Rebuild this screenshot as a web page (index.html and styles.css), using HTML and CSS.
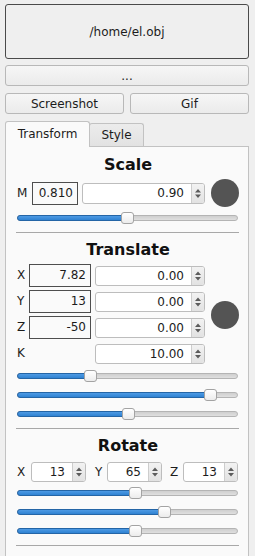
FILE: index.html
```html
<!DOCTYPE html>
<html lang="en">
<head>
  <meta charset="UTF-8" />
  <title>Viewer</title>
  <link rel="stylesheet" href="styles.css">
</head>
<body>
  <div class="app">
    <button class="btn file-btn">/home/el.obj</button>
    <button class="btn small-btn">...</button>
    <div class="btn-row">
      <button class="btn small-btn">Screenshot</button>
      <button class="btn small-btn">Gif</button>
    </div>

    <!-- Tabs -->
    <div class="tabs">
      <div class="tab active">Transform</div>
      <div class="tab">Style</div>
    </div>

    <div class="pane">
      <!-- Scale -->
      <h2 class="title">Scale</h2>
      <div class="scale-row">
        <span class="lbl">M</span>
        <div class="box scale-box">0.810</div>
        <div class="spin scale-spin"><span class="val">0.90</span><span class="arrows"><svg viewBox="0 0 12 19" width="12" height="19"><path d="M3 8.5 L6 5 L9 8.5 Z M3 10.5 L6 14 L9 10.5 Z"/></svg></span></div>
        <div class="dot"></div>
      </div>
      <div class="slider first" style="--v: 104px"><div class="handle"></div></div>

      <hr class="sep">

      <!-- Translate -->
      <h2 class="title">Translate</h2>
      <div class="tr-grid">
        <span class="lbl">X</span>
        <div class="box">7.82</div>
        <div class="spin"><span class="val">0.00</span><span class="arrows"><svg viewBox="0 0 12 18" width="12" height="18"><path d="M3 8 L6 4.5 L9 8 Z M3 10 L6 13.5 L9 10 Z"/></svg></span></div>
        <div class="dot tall"></div>

        <span class="lbl">Y</span>
        <div class="box">13</div>
        <div class="spin"><span class="val">0.00</span><span class="arrows"><svg viewBox="0 0 12 18" width="12" height="18"><path d="M3 8 L6 4.5 L9 8 Z M3 10 L6 13.5 L9 10 Z"/></svg></span></div>

        <span class="lbl">Z</span>
        <div class="box">-50</div>
        <div class="spin"><span class="val">0.00</span><span class="arrows"><svg viewBox="0 0 12 18" width="12" height="18"><path d="M3 8 L6 4.5 L9 8 Z M3 10 L6 13.5 L9 10 Z"/></svg></span></div>

        <span class="lbl">K</span>
        <span></span>
        <div class="spin"><span class="val">10.00</span><span class="arrows"><svg viewBox="0 0 12 18" width="12" height="18"><path d="M3 8 L6 4.5 L9 8 Z M3 10 L6 13.5 L9 10 Z"/></svg></span></div>
      </div>
      <div class="slider first" style="--v: 67px"><div class="handle"></div></div>
      <div class="slider" style="--v: 187px"><div class="handle"></div></div>
      <div class="slider" style="--v: 105px"><div class="handle"></div></div>

      <hr class="sep">

      <!-- Rotate -->
      <h2 class="title">Rotate</h2>
      <div class="rot-row">
        <span class="lbl rx">X</span>
        <div class="spin"><span class="val">13</span><span class="arrows"><svg viewBox="0 0 12 18" width="12" height="18"><path d="M3 8 L6 4.5 L9 8 Z M3 10 L6 13.5 L9 10 Z"/></svg></span></div>
        <span class="lbl ry">Y</span>
        <div class="spin"><span class="val">65</span><span class="arrows"><svg viewBox="0 0 12 18" width="12" height="18"><path d="M3 8 L6 4.5 L9 8 Z M3 10 L6 13.5 L9 10 Z"/></svg></span></div>
        <span class="lbl rz">Z</span>
        <div class="spin"><span class="val">13</span><span class="arrows"><svg viewBox="0 0 12 18" width="12" height="18"><path d="M3 8 L6 4.5 L9 8 Z M3 10 L6 13.5 L9 10 Z"/></svg></span></div>
      </div>
      <div class="slider first" style="--v: 112px"><div class="handle"></div></div>
      <div class="slider" style="--v: 141px"><div class="handle"></div></div>
      <div class="slider" style="--v: 112px"><div class="handle"></div></div>

      <hr class="sep last">
    </div>
  </div>
</body>
</html>
```

FILE: styles.css
```css
:root {
  --bg: #efefef;
  --pane: #fafafa;
  --text: #1c1c1c;
  --frame: #c2c2c2;
  --accent: #3a8ddc;
  --accent-dark: #2465a6;
  --dot: #545454;
}

body {
  margin: 0;
  background: var(--bg);
  color: var(--text);
  font-family: "DejaVu Sans", "Liberation Sans", sans-serif;
  font-size: 12px;
  overflow: hidden;
}

.app {
  padding: 4px 6px 0 5px;
}

.btn {
  display: block;
  width: 100%;
  box-sizing: border-box;
  font: inherit;
  color: var(--text);
  border: 1px solid #b8b8b8;
  border-radius: 3px;
  background: linear-gradient(#f6f6f6, #ebebeb);
  padding: 0;
}

.file-btn {
  height: 55px;
  border-color: #4a4a4a;
  background: var(--bg);
}

.small-btn {
  height: 21px;
  margin-top: 6px;
}

.btn-row {
  display: grid;
  grid-template-columns: 1fr 1fr;
  gap: 6px;
  margin-top: 1px;
}

.tabs {
  display: flex;
  align-items: flex-end;
  height: 25px;
  margin-top: 7px;
}

.tab {
  box-sizing: border-box;
  height: 23px;
  line-height: 22px;
  border: 1px solid var(--frame);
  border-bottom: none;
  border-radius: 3px 3px 0 0;
  background: linear-gradient(#ececec, #e2e2e2);
  text-align: center;
  width: 55px;
  margin-left: -1px;
}

.tab.active {
  height: 26px;
  line-height: 25px;
  width: 85px;
  margin: 0 0 -1px 0;
  background: var(--pane);
  position: relative;
  z-index: 1;
}

.pane {
  border: 1px solid var(--frame);
  background: var(--pane);
  padding: 8px 9px 40px 11px;
}

.title {
  margin: 0;
  height: 20px;
  line-height: 20px;
  font-size: 16px;
  font-weight: bold;
  text-align: center;
  color: #111;
}

.lbl {
  line-height: 23px;
}

.box {
  box-sizing: border-box;
  height: 23px;
  line-height: 21px;
  border: 1px solid #4e4e4e;
  text-align: right;
  padding-right: 4px;
  background: var(--pane);
}

.spin {
  box-sizing: border-box;
  height: 20px;
  display: flex;
  border: 1px solid #bdbdbd;
  border-radius: 3px;
  background: #fff;
  overflow: hidden;
}

.spin .val {
  flex: 1;
  text-align: right;
  line-height: 18px;
  padding-right: 7px;
}

.spin .arrows {
  display: flex;
  width: 12px;
  border-left: 1px solid #cdcdcd;
  background: linear-gradient(#f2f2f2, #e2e2e2);
}

.spin .arrows svg {
  display: block;
  fill: #5c5c5c;
}

.dot {
  width: 28px;
  height: 28px;
  border-radius: 50%;
  background: var(--dot);
}

/* Scale */
.scale-row {
  display: flex;
  align-items: center;
  height: 28px;
  margin-top: 4px;
}

.scale-row .lbl {
  width: 15px;
}

.scale-box {
  width: 46px;
}

.scale-spin {
  width: 123px;
  height: 21px;
  margin: 0 6px 0 4px;
}

.scale-spin .val {
  line-height: 19px;
}

/* Translate */
.tr-grid {
  display: grid;
  grid-template-columns: 12px 62px 1fr 28px;
  grid-auto-rows: 23px;
  row-gap: 3px;
  align-items: center;
  margin-top: 4px;
}

.tr-grid .spin {
  margin: 0 6px 0 4px;
}

.dot.tall {
  grid-column: 4;
  grid-row: 1 / span 4;
}

/* Rotate */
.rot-row {
  display: flex;
  align-items: center;
  margin-top: 6px;
}

.rot-row .lbl {
  line-height: 20px;
}

.rot-row .spin {
  width: 55px;
}

.rx { width: 14px; }
.ry { width: 12px; margin-left: 9px; }
.rz { width: 13px; margin-left: 8px; }

/* Sliders */
.slider {
  position: relative;
  height: 12px;
  width: 221px;
  margin-top: 7px;
}

.slider.first {
  margin-top: 5px;
}

.slider::before {
  content: "";
  position: absolute;
  left: 0;
  right: 0;
  top: 3px;
  height: 6px;
  box-sizing: border-box;
  border: 1px solid #b4b4b4;
  border-radius: 3px;
  background: linear-gradient(#cfcfcf, #dfdfdf);
}

.slider::after {
  content: "";
  position: absolute;
  left: 0;
  top: 3px;
  height: 6px;
  width: calc(var(--v) + 6px);
  box-sizing: border-box;
  border: 1px solid var(--accent-dark);
  border-radius: 3px;
  background: linear-gradient(#4d9ae4, #2f82d2);
}

.handle {
  position: absolute;
  top: 0;
  left: var(--v);
  width: 13px;
  height: 12px;
  box-sizing: border-box;
  border: 1px solid #a3a3a3;
  border-radius: 3px;
  background: linear-gradient(#ffffff, #ececec);
  z-index: 1;
}

.sep {
  border: none;
  border-top: 1px solid #a8a8a8;
  margin: 7px 0 7px -1px;
  height: 0;
}

.slider + .sep {
  margin-top: 8px;
}
```
